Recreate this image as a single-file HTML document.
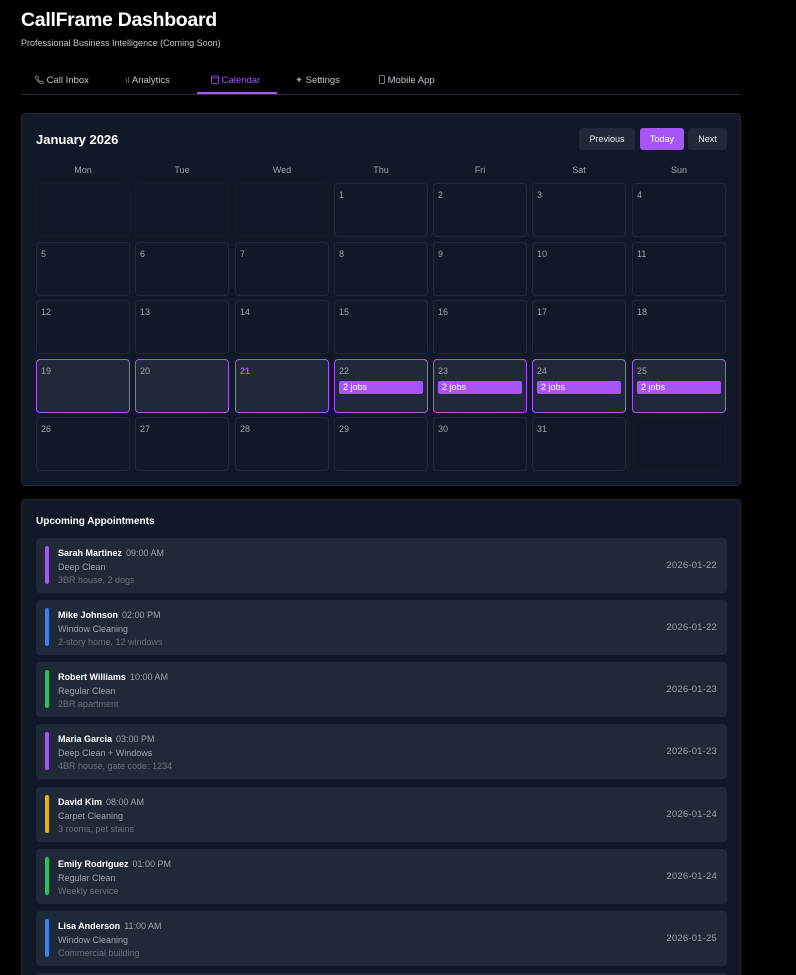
<!DOCTYPE html>
<html style="height:975px;overflow:hidden"><head><style>
*{box-sizing:border-box;margin:0;padding:0}
html,body{background:#000}
body{width:796px;height:975px;overflow:hidden;font-family:"Liberation Sans",sans-serif;color:#e5e7eb;position:relative}
.abs{position:absolute}
h1{position:absolute;left:21px;top:9px;font-size:19.5px;font-weight:bold;color:#fff;letter-spacing:-0.3px}
.sub{left:21px;top:38px;font-size:9px;color:#c4c7ce}
.tabs{left:21px;top:67px;width:720px;height:28px;border-bottom:1px solid #2a2d3a}
.tab{position:absolute;top:8px;font-size:9.5px;color:#c4c7ce}
.tab.act{color:#a855f7}
.ul{position:absolute;left:176px;top:25px;width:80px;height:2px;background:#a855f7}
.card{position:absolute;left:21px;width:720px;background:#111827;border:1px solid #1f2937;border-radius:4px}
.cal{top:113px;height:373px}
.title{position:absolute;left:14px;top:18px;font-size:13px;font-weight:bold;color:#fff}
.btn{position:absolute;top:14px;height:22px;border-radius:3px;background:#1f2937;color:#e5e7eb;font-size:9px;text-align:center;line-height:22px}
.dow{position:absolute;top:51px;width:94px;text-align:center;font-size:9px;color:#9ca3af}
.cell{position:absolute;width:94px;height:54px;border:1px solid #1f2937;border-radius:4px;font-size:9px;color:#9ca3af;padding:6px 4px}
.cell.hl{border-color:#a855f7;background:#1f2937}
.cell.em{border-color:#161d2a}
.job{margin-top:5px;background:#a855f7;color:#fff;height:13px;line-height:13px;border-radius:2px;padding-left:4px;font-size:9px}
.apc{top:499px;height:500px}
.item{position:absolute;left:14px;width:691px;height:55px;background:#1f2937;border-radius:4px}
.bar{position:absolute;left:9px;top:8px;width:4px;height:38px;border-radius:2px}
.nm{position:absolute;left:22px;top:10px;font-size:9px;color:#fff;font-weight:bold}
.nm span{font-weight:normal;color:#9ca3af;margin-left:4px}
.ty{position:absolute;left:22px;top:24px;font-size:9px;color:#9ca3af}
.nt{position:absolute;left:22px;top:37px;font-size:9px;color:#6b7280}
.dt{position:absolute;right:10px;top:22px;font-size:9.5px;color:#9ca3af;letter-spacing:.2px}
</style></head><body>
<h1>CallFrame Dashboard</h1>
<div class="abs sub">Professional Business Intelligence (Coming Soon)</div>
<div class="abs tabs">
<div class="tab" style="left:14px"><svg width="9" height="9" viewBox="0 0 10 10" style="vertical-align:-1px"><path d="M2 1l2 2-1 1.5c.8 1.5 1.5 2.2 3 3L7.5 6.5l2 2-1.5 1.3C5 9.5.5 5 .5 2z" fill="none" stroke="#9ca3af" stroke-width=".8"/></svg> Call Inbox</div>
<div class="tab" style="left:104px"><span style="color:#6b7280">ıl</span> Analytics</div>
<div class="tab act" style="left:190px"><svg width="8" height="9" viewBox="0 0 8 9" style="vertical-align:-1px"><rect x=".5" y="1" width="7" height="7.5" rx="1" fill="none" stroke="#a855f7" stroke-width=".8"/><path d="M.5 3h7" stroke="#a855f7" stroke-width=".8"/></svg> Calendar</div>
<div class="tab" style="left:274px"><span style="color:#9ca3af">✦</span> Settings</div>
<div class="tab" style="left:358px"><svg width="6" height="9" viewBox="0 0 6 9" style="vertical-align:-1px"><rect x=".5" y=".5" width="5" height="8" rx="1" fill="none" stroke="#9ca3af" stroke-width=".8"/></svg> Mobile App</div>
<div class="ul"></div>
</div>

<div class="card cal">
<div class="title">January 2026</div>
<div class="btn" style="left:557px;width:56px">Previous</div>
<div class="btn" style="left:618px;width:44px;background:#a855f7;color:#fff">Today</div>
<div class="btn" style="left:666px;width:39px">Next</div>
<div class="dow" style="left:14px">Mon</div><div class="dow" style="left:113px">Tue</div><div class="dow" style="left:213px">Wed</div><div class="dow" style="left:312px">Thu</div><div class="dow" style="left:411px">Fri</div><div class="dow" style="left:510px">Sat</div><div class="dow" style="left:610px">Sun</div>
<div id="g"></div>
</div>

<div class="card apc" style="height:476px;border-bottom:none;border-radius:4px 4px 0 0">
<div class="title" style="top:16px;font-size:10px">Upcoming Appointments</div>
<div class="item" style="top:38px"><div class="bar" style="background:#a855f7"></div><div class="nm">Sarah Martinez<span>09:00 AM</span></div><div class="ty">Deep Clean</div><div class="nt">3BR house, 2 dogs</div><div class="dt">2026-01-22</div></div>
<div class="item" style="top:100px"><div class="bar" style="background:#3b82f6"></div><div class="nm">Mike Johnson<span>02:00 PM</span></div><div class="ty">Window Cleaning</div><div class="nt">2-story home, 12 windows</div><div class="dt">2026-01-22</div></div>
<div class="item" style="top:162px"><div class="bar" style="background:#22c55e"></div><div class="nm">Robert Williams<span>10:00 AM</span></div><div class="ty">Regular Clean</div><div class="nt">2BR apartment</div><div class="dt">2026-01-23</div></div>
<div class="item" style="top:224px"><div class="bar" style="background:#a855f7"></div><div class="nm">Maria Garcia<span>03:00 PM</span></div><div class="ty">Deep Clean + Windows</div><div class="nt">4BR house, gate code: 1234</div><div class="dt">2026-01-23</div></div>
<div class="item" style="top:287px"><div class="bar" style="background:#eab308"></div><div class="nm">David Kim<span>08:00 AM</span></div><div class="ty">Carpet Cleaning</div><div class="nt">3 rooms, pet stains</div><div class="dt">2026-01-24</div></div>
<div class="item" style="top:349px"><div class="bar" style="background:#22c55e"></div><div class="nm">Emily Rodriguez<span>01:00 PM</span></div><div class="ty">Regular Clean</div><div class="nt">Weekly service</div><div class="dt">2026-01-24</div></div>
<div class="item" style="top:411px"><div class="bar" style="background:#3b82f6"></div><div class="nm">Lisa Anderson<span>11:00 AM</span></div><div class="ty">Window Cleaning</div><div class="nt">Commercial building</div><div class="dt">2026-01-25</div></div>
<div class="item" style="top:473px;height:3px;border-radius:4px 4px 0 0"></div>
</div>
<script>
var g=document.getElementById('g'),h='',rows=[69,128,186,245,303],cols=[14,113,213,312,411,510,610];
for(var i=0;i<35;i++){var d=i-2,r=Math.floor(i/7),c=i%7,cls='cell',t='';
if(d<1||d>31){cls+=' em'}else{t=d}
if(d>=19&&d<=25)cls+=' hl';
var inner=t;if(d==21)inner='<b style="color:#a855f7">21</b>';
if(d>=22&&d<=25)inner+='<div class="job">2 jobs</div>';
h+='<div class="'+cls+'" style="left:'+cols[c]+'px;top:'+rows[r]+'px">'+inner+'</div>';}
g.innerHTML=h;
</script>
</body></html>
